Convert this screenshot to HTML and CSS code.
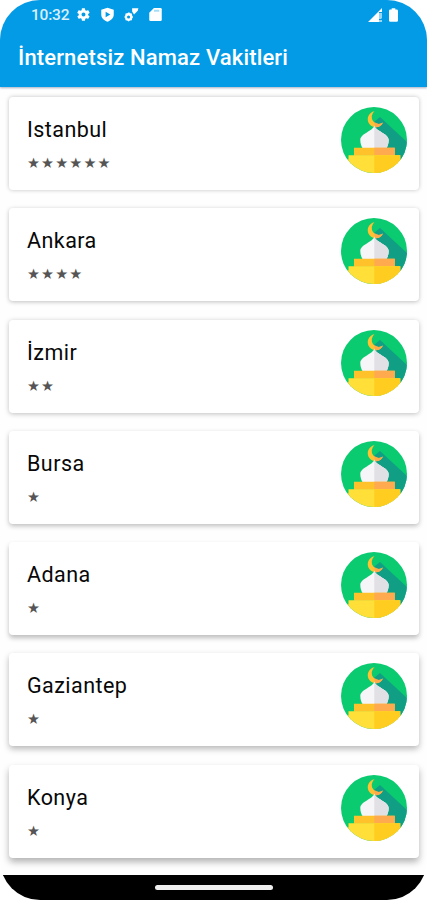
FILE: index.html
```
<!DOCTYPE html>
<html lang="tr">
<head>
  <meta charset="UTF-8">
  <meta name="viewport" content="width=device-width, initial-scale=1.0">
  <title>İnternetsiz Namaz Vakitleri</title>
  <link rel="stylesheet" href="styles.css">
</head>
<body>
  <svg class="defs" width="0" height="0">
    <symbol id="mosque" viewBox="0 0 66 66">
      <clipPath id="disc"><circle cx="33" cy="33" r="33"/></clipPath>
      <g clip-path="url(#disc)">
        <path fill="#0acb70" d="M0 0h66v66H0z"/>
        <path fill="#109f84" d="M39 10L66 35v20H47L33 41V15z"/>
        <path fill="#ffc233" d="M33.500 4.300A8 8 0 1 0 42 15.500 6.600 6.600 0 0 1 33.500 4.300z"/>
        <path fill="#ffa94d" d="M33.500 20.300A8.500 8.500 0 0 0 42 15.500 7 7 0 0 1 33.500 15z"/>
        <path fill="#f6f5f8" d="M33.300 18.500c-1 5.500-14 8-14 14.500 0 3.500 1 6 2.200 8h24c1.200-2 2.200-4.500 2.200-8 0-6.500-13.400-9-14.400-14.500z"/>
        <path fill="#e1e0e5" d="M33.300 18.500c1 5.500 14.400 8 14.400 14.500 0 3.500-1 6-2.200 8H33.300z"/>
        <path fill="#ffc22b" d="M13 40.700h40.800v8H13z"/>
        <path fill="#ffaa4f" d="M33.300 40.700h20.500v8H33.300z"/>
        <path fill="#ffdf38" d="M7.500 48.300h51.800v4.200H66V66H0V52.500h7.500z"/>
        <path fill="#ffcd20" d="M33.300 48.300h26v4.200H66V66H33.300z"/>
      </g>
    </symbol>
  </svg>

  <div class="phone">
    <header class="app-bar">
      <div class="status-bar">
        <span class="clock">10:32</span>
        <svg class="status-icon" viewBox="0 0 24 24"><path fill-rule="evenodd" d="M19.400 13a7.500 7.500 0 0 0 0-2l2.100-1.600c.2-.1.200-.4.100-.6l-2-3.500c-.1-.2-.4-.3-.6-.2l-2.500 1a7.300 7.300 0 0 0-1.700-1l-.4-2.600a.5.5 0 0 0-.5-.5h-4a.5.5 0 0 0-.5.500L9 5.100a7.700 7.700 0 0 0-1.700 1l-2.500-1c-.2-.1-.5 0-.6.200l-2 3.500c-.1.200-.1.500.1.600L4.500 11a8 8 0 0 0 0 2l-2.200 1.600c-.2.100-.2.400-.1.600l2 3.500c.1.200.4.300.6.200l2.500-1a7.300 7.300 0 0 0 1.700 1l.4 2.600c0 .3.200.5.500.5h4c.3 0 .5-.2.500-.5l.4-2.600a7.700 7.700 0 0 0 1.700-1l2.500 1c.2.100.5 0 .6-.2l2-3.500c.1-.2.100-.5-.1-.6zM12 15.200a3.200 3.200 0 1 1 0-6.400 3.200 3.200 0 0 1 0 6.400z"/></svg>
        <svg class="status-icon" viewBox="0 0 24 24"><path fill-rule="evenodd" d="M12 1L2 4.500V12c0 5.500 4.300 9.500 10 11.500 5.700-2 10-6 10-11.500V4.500zM9 7.500l7.500 4.500L9 16.500z"/></svg>
        <svg class="status-icon" viewBox="0 0 24 24"><path fill-rule="evenodd" d="M13 2h10l-1 4-6 6-3-5zM8 8.500l2 1.500 2.500.5.500 3 1.500 2.500-1.500 2.500-.5 2.500-3 .5L7.500 23 5 21.500 2.500 21 2 18.500.5 16 2 13.500l.5-3L5 10zM7.300 13.500a2.500 2.500 0 1 0 0 5 2.500 2.500 0 0 0 0-5z"/></svg>
        <svg class="status-icon" viewBox="0 0 24 24"><path d="M9.500 1.500H20a2 2 0 0 1 2 2v17a2 2 0 0 1-2 2H4a2 2 0 0 1-2-2V9z"/><path fill="#039be6" opacity=".35" d="M9.500 4.500H18v3H9.500z"/></svg>
        <svg class="signal" viewBox="0 0 15 14"><path d="M0 14L14 0v4h-3v10z"/><path opacity=".6" d="M11 5h3v5l-1 1h-2zM11 12h3v2h-3z"/></svg>
        <svg class="battery" viewBox="0 0 10 15"><path d="M3 0h4v1.500h1.500A1.500 1.500 0 0 1 10 3v10.500A1.500 1.500 0 0 1 8.500 15h-7A1.500 1.500 0 0 1 0 13.500V3a1.500 1.500 0 0 1 1.500-1.500H3z"/></svg>
      </div>
      <h1>İnternetsiz Namaz Vakitleri</h1>
    </header>

    <main class="city-list">
      <div class="card depth-1">
        <div class="city">
          <h2>Istanbul</h2>
          <div class="stars">★★★★★★</div>
        </div>
        <svg class="mosque"><use href="#mosque"/></svg>
      </div>
      <div class="card depth-2">
        <div class="city">
          <h2>Ankara</h2>
          <div class="stars">★★★★</div>
        </div>
        <svg class="mosque"><use href="#mosque"/></svg>
      </div>
      <div class="card depth-3">
        <div class="city">
          <h2>İzmir</h2>
          <div class="stars">★★</div>
        </div>
        <svg class="mosque"><use href="#mosque"/></svg>
      </div>
      <div class="card depth-4">
        <div class="city">
          <h2>Bursa</h2>
          <div class="stars">★</div>
        </div>
        <svg class="mosque"><use href="#mosque"/></svg>
      </div>
      <div class="card depth-5">
        <div class="city">
          <h2>Adana</h2>
          <div class="stars">★</div>
        </div>
        <svg class="mosque"><use href="#mosque"/></svg>
      </div>
      <div class="card depth-6">
        <div class="city">
          <h2>Gaziantep</h2>
          <div class="stars">★</div>
        </div>
        <svg class="mosque"><use href="#mosque"/></svg>
      </div>
      <div class="card depth-7">
        <div class="city">
          <h2>Konya</h2>
          <div class="stars">★</div>
        </div>
        <svg class="mosque"><use href="#mosque"/></svg>
      </div>
    </main>

    <footer class="nav-bar">
      <div class="home-handle"></div>
    </footer>
  </div>
</body>
</html>
```
FILE: styles.css
```
* {
  box-sizing: border-box;
}

body {
  margin: 0;
  background-color: white;
  font-family: Roboto, sans-serif;
}

.defs {
  display: block;
}

.phone {
  display: flex;
  flex-direction: column;
  width: 427px;
  height: 900px;
  overflow: hidden;
  border-radius: 40px;
  background-color: #fefefe;
}

/* App bar */
.app-bar {
  height: 87px;
  flex-shrink: 0;
  background-color: #039be6;
  color: white;
  box-shadow: 0 1px 2px rgba(40, 60, 110, 0.4);
}

.status-bar {
  display: flex;
  align-items: center;
  height: 29px;
  padding-left: 31px;
  padding-right: 29px;
  fill: white;
}

.clock {
  width: 45px;
  padding-top: 1px;
  font-size: 15.500px;
  font-weight: 500;
  letter-spacing: -0.2px;
  color: #d9effc;
}

.status-icon {
  width: 15px;
  height: 15px;
  margin-right: 9px;
}

.signal {
  width: 15px;
  height: 14px;
  margin-left: auto;
  margin-right: 6px;
}

.battery {
  width: 9px;
  height: 14px;
}

h1 {
  margin: 1px 18px 0;
  font-size: 22px;
  font-weight: 500;
  line-height: 56px;
  letter-spacing: 0.15px;
  white-space: nowrap;
}

/* City cards */
.city-list {
  display: flex;
  flex-direction: column;
  gap: 18.300px;
  height: 788px;
  padding: 10px 8px 0 9px;
  overflow: hidden;
}

.card {
  display: flex;
  justify-content: space-between;
  flex-shrink: 0;
  height: 93px;
  padding: 10px 12px 0 18px;
  border-radius: 4px;
  background-color: white;
}

.depth-1 { box-shadow: 0 0 4px rgba(0, 0, 0, 0.24); }
.depth-2 { box-shadow: 0 1px 4px rgba(0, 0, 0, 0.25); }
.depth-3 { box-shadow: 0 1px 5px rgba(0, 0, 0, 0.25); }
.depth-4 { box-shadow: 0 2px 5px rgba(0, 0, 0, 0.26); }
.depth-5 { box-shadow: 0 3px 5px rgba(0, 0, 0, 0.26); }
.depth-6 { box-shadow: 0 3px 6px rgba(0, 0, 0, 0.28); }
.depth-7 { box-shadow: 0 4px 7px rgba(0, 0, 0, 0.3); }

h2 {
  margin: 8px 0 0;
  font-size: 21.500px;
  font-weight: 400;
  line-height: 30px;
  letter-spacing: 0.45px;
  color: #080808;
}

.stars {
  margin-top: 8px;
  font-family: "DejaVu Sans", sans-serif;
  font-size: 14.500px;
  line-height: 20px;
  letter-spacing: 1.100px;
  color: #555;
}

.mosque {
  width: 66px;
  height: 66px;
}

/* Gesture navigation */
.nav-bar {
  display: flex;
  justify-content: center;
  flex-shrink: 0;
  height: 25px;
  padding-top: 10px;
  background-color: black;
}

.home-handle {
  width: 118px;
  height: 5px;
  border-radius: 3px;
  background-color: #eee;
}
```
